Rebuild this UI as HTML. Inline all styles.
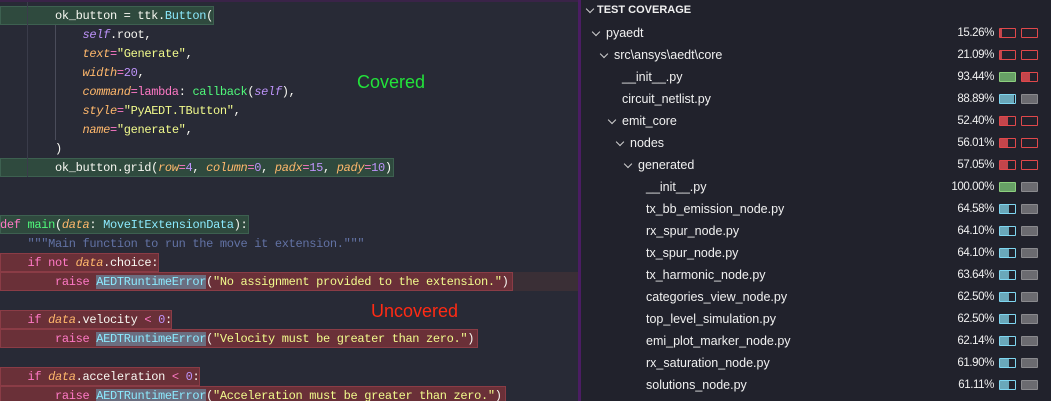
<!DOCTYPE html>
<html><head><meta charset="utf-8"><style>
*{margin:0;padding:0;box-sizing:border-box}
body{width:1051px;height:401px;overflow:hidden;background:#282a36;position:relative;font-family:"Liberation Sans",sans-serif}
#ed{position:absolute;left:0;top:0;width:578px;height:401px;background:#282a36;overflow:hidden;border-top:2px solid #3a2348}
.l{position:absolute;left:0;height:19px;line-height:20px;font-family:"Liberation Mono",monospace;font-size:12px;letter-spacing:-0.33px;color:#f8f8f2;white-space:pre}
.hg{position:absolute;left:0;height:19px;background:#2f4a3e;border:1px solid #3d6050}
.hr{position:absolute;left:0;height:19px;background:#6a3038;border:1px solid #8a3c46}
.k{color:#ff79c6}.p{color:#ffb86c;font-style:italic}.s{color:#f1fa8c}.n{color:#bd93f9}.sf{color:#bd93f9;font-style:italic}.c{color:#8be9fd}.f{color:#50fa7b}.cm{color:#6272a4}
.e{background:#6b6e80;color:#8be9fd}
#div{position:absolute;left:578px;top:0;width:3px;height:401px;background:#4b1d63}
#pn{position:absolute;left:581px;top:0;width:470px;height:401px;background:#21222c}
.r{position:absolute;left:0;width:470px;height:22px;line-height:22px;font-size:12.5px;color:#f0f0f0}
.ch{position:absolute;top:7px;width:6px;height:6px;border-right:1.3px solid #cfcfcf;border-bottom:1.3px solid #cfcfcf;transform:rotate(45deg)}
.pc{position:absolute;right:57px;font-size:11.5px;letter-spacing:-0.4px;color:#f0f0f0}
.b{position:absolute;top:6px;width:17px;height:10px;border:1px solid;border-radius:1px;overflow:hidden}
.b i{display:block;height:100%}
</style></head><body>
<div id="ed">
<div class="hg" style="top:4px;width:214px"></div>
<div class="hg" style="top:156px;width:394px"></div>
<div class="hg" style="top:213px;width:249px"></div>
<div class="hr" style="top:251px;width:159px"></div>
<div class="hr" style="top:270px;width:513px"></div>
<div style="position:absolute;left:513px;top:270px;width:65px;height:19px;background:#3a2f36"></div>
<div class="hr" style="top:308px;width:172px"></div>
<div class="hr" style="top:327px;width:478px"></div>
<div class="hr" style="top:365px;width:200px"></div>
<div class="hr" style="top:384px;width:506px"></div>
<div style="position:absolute;left:27px;top:0;width:1px;height:175px;background:#3a3c4a"></div>
<div style="position:absolute;left:55px;top:23px;width:1px;height:115px;background:#4a4c5a"></div>
<div class="l" style="top:4px">        ok_button = ttk.<span class="c">Button</span>(</div>
<div class="l" style="top:23px">            <span class="sf">self</span>.root,</div>
<div class="l" style="top:42px">            <span class="p">text</span><span class="k">=</span><span class="s">"Generate"</span>,</div>
<div class="l" style="top:61px">            <span class="p">width</span><span class="k">=</span><span class="n">20</span>,</div>
<div class="l" style="top:80px">            <span class="p">command</span><span class="k">=lambda</span>: <span class="f">callback</span>(<span class="sf">self</span>),</div>
<div class="l" style="top:99px">            <span class="p">style</span><span class="k">=</span><span class="s">"PyAEDT.TButton"</span>,</div>
<div class="l" style="top:118px">            <span class="p">name</span><span class="k">=</span><span class="s">"generate"</span>,</div>
<div class="l" style="top:137px">        )</div>
<div class="l" style="top:156px">        ok_button.grid(<span class="p">row</span><span class="k">=</span><span class="n">4</span>, <span class="p">column</span><span class="k">=</span><span class="n">0</span>, <span class="p">padx</span><span class="k">=</span><span class="n">15</span>, <span class="p">pady</span><span class="k">=</span><span class="n">10</span>)</div>
<div class="l" style="top:213px"><span class="k">def</span> <span class="f">main</span>(<span class="p">data</span>: <span class="c">MoveItExtensionData</span>):</div>
<div class="l" style="top:232px">    <span class="cm">"""Main function to run the move it extension."""</span></div>
<div class="l" style="top:251px">    <span class="k">if not</span> <span class="p">data</span>.choice:</div>
<div class="l" style="top:270px">        <span class="k">raise</span> <span class="e">AEDTRuntimeError</span>(<span class="s">"No assignment provided to the extension."</span>)</div>
<div class="l" style="top:308px">    <span class="k">if</span> <span class="p">data</span>.velocity <span class="k">&lt;</span> <span class="n">0</span>:</div>
<div class="l" style="top:327px">        <span class="k">raise</span> <span class="e">AEDTRuntimeError</span>(<span class="s">"Velocity must be greater than zero."</span>)</div>
<div class="l" style="top:365px">    <span class="k">if</span> <span class="p">data</span>.acceleration <span class="k">&lt;</span> <span class="n">0</span>:</div>
<div class="l" style="top:384px">        <span class="k">raise</span> <span class="e">AEDTRuntimeError</span>(<span class="s">"Acceleration must be greater than zero."</span>)</div>
<div style="position:absolute;left:357px;top:70px;font-size:18px;color:#22e33a">Covered</div>
<div style="position:absolute;left:371px;top:299px;font-size:18px;color:#ff2a14">Uncovered</div>
</div>
<div id="div"></div>
<div id="pn">
<div class="ch" style="left:6px;top:6px"></div>
<div style="position:absolute;left:16px;top:4px;font-size:11px;font-weight:bold;color:#f0f0f0">TEST COVERAGE</div>
<div id="rows"></div>
</div>
<script>
var R=[[0,1,"pyaedt","15.26%","r",0.1,"r",0],[1,1,"src\\ansys\\aedt\\core","21.09%","r",0.15,"r",0],[2,0,"__init__.py","93.44%","g",1,"r",0.5],[2,0,"circuit_netlist.py","88.89%","b",0.9,"x",1],[2,1,"emit_core","52.40%","r",0.5,"r",0],[3,1,"nodes","56.01%","r",0.55,"r",0],[4,1,"generated","57.05%","r",0.55,"r",0],[5,0,"__init__.py","100.00%","g",1,"x",1]];
["tx_bb_emission_node.py|64.58%","rx_spur_node.py|64.10%","tx_spur_node.py|64.10%","tx_harmonic_node.py|63.64%","categories_view_node.py|62.50%","top_level_simulation.py|62.50%","emi_plot_marker_node.py|62.14%","rx_saturation_node.py|61.90%","solutions_node.py|61.11%"].forEach(function(s){var a=s.split("|");R.push([5,0,a[0],a[1],"b",0.6,"x",1]);});
var C={r:["#e0484b","#c4454b"],g:["#8ccf7e","#67a066"],b:["#7fd6f0","#6aa8ba"],x:["#8a8a8e","#6b6b70"]};
function bar(x,t,f){return '<div class="b" style="left:'+x+'px;border-color:'+C[t][0]+'"><i style="width:'+(f*100)+'%;background:'+C[t][1]+'"></i></div>';}
var h="";R.forEach(function(r,i){var top=22+i*22,ind=r[0]*8;
h+='<div class="r" style="top:'+top+'px">'+(r[1]?'<div class="ch" style="left:'+(12+ind)+'px"></div>':'')+'<span style="position:absolute;left:'+(25+ind)+'px">'+r[2]+'</span><span class="pc">'+r[3]+'</span>'+bar(418,r[4],r[5])+bar(440,r[6],r[7])+'</div>';});
document.getElementById("rows").innerHTML=h;
</script>
</body></html>
